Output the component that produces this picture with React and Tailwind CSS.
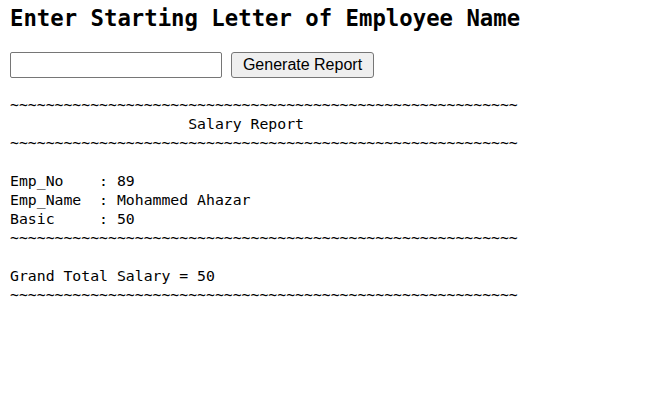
import React from "react";

const T = "~".repeat(57);

export default function App() {
  const report = [
    T,
    " ".repeat(20) + "Salary Report",
    T,
    "",
    "Emp_No    : 89",
    "Emp_Name  : Mohammed Ahazar",
    "Basic     : 50",
    T,
    "",
    "Grand Total Salary = 50",
    T,
  ].join("\n");

  return (
    <div className="min-h-screen bg-white pl-[10px] pt-[4px] text-black">
      <h2 className="font-['DejaVu_Sans_Mono',monospace] text-[22.3px] font-bold leading-[28px]">
        Enter Starting Letter of Employee Name
      </h2>
      <div className="mt-[20px] flex items-center gap-[9px]">
        <input
          type="text"
          className="h-[26px] w-[212px] rounded-[2px] border border-[#767676] bg-white px-1 font-['Liberation_Sans',sans-serif] text-[16px] outline-none"
        />
        <button className="h-[26px] w-[143px] rounded-[3px] border border-[#767676] bg-[#efefef] px-[6px] font-['Liberation_Sans',sans-serif] text-[16px] leading-[20px] text-black">
          Generate Report
        </button>
      </div>
      <pre className="mt-[17px] font-['DejaVu_Sans_Mono',monospace] text-[14.8px] leading-[19px]">
        {report}
      </pre>
    </div>
  );
}
